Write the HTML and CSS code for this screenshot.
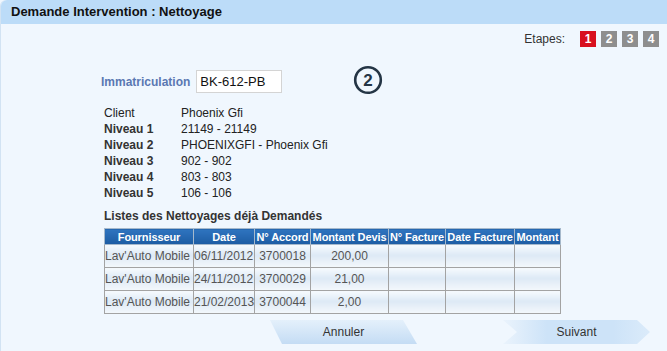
FILE: index.html
```html
<!DOCTYPE html>
<html lang="fr">
<head>
    <meta charset="UTF-8">
    <title>Demande Intervention : Nettoyage</title>
    <link rel="stylesheet" href="styles.css">
</head>
<body>
    <div class="panel">
        <div class="panel-head">Demande Intervention : Nettoyage</div>

        <div class="steps">
            <span class="steps-label">Etapes:</span>
            <span class="step active">1</span>
            <span class="step">2</span>
            <span class="step">3</span>
            <span class="step">4</span>
        </div>

        <div class="content">
            <div class="immat">
                <label for="immat">Immatriculation</label>
                <input type="text" id="immat" value="BK-612-PB">
                <svg class="num" width="30" height="30" viewBox="0 0 30 30">
                    <circle cx="15" cy="15" r="12.8" fill="none" stroke="#243545" stroke-width="2.6"/>
                    <text x="15" y="21" text-anchor="middle" font-family="Liberation Sans, Arial, sans-serif" font-weight="bold" font-size="17" fill="#243545">2</text>
                </svg>
            </div>

            <table class="info">
                <tr><td class="lbl plain">Client</td><td>Phoenix Gfi</td></tr>
                <tr><td class="lbl">Niveau 1</td><td>21149 - 21149</td></tr>
                <tr><td class="lbl">Niveau 2</td><td>PHOENIXGFI - Phoenix Gfi</td></tr>
                <tr><td class="lbl">Niveau 3</td><td>902 - 902</td></tr>
                <tr><td class="lbl">Niveau 4</td><td>803 - 803</td></tr>
                <tr><td class="lbl">Niveau 5</td><td>106 - 106</td></tr>
            </table>

            <h3 class="list-title">Listes des Nettoyages déjà Demandés</h3>

            <table class="grid">
                <colgroup>
                    <col class="c-four">
                    <col class="c-date">
                    <col class="c-acc">
                    <col class="c-dev">
                    <col class="c-fac">
                    <col class="c-dfac">
                    <col class="c-mnt">
                </colgroup>
                <thead>
                    <tr>
                        <th>Fournisseur</th>
                        <th>Date</th>
                        <th>N° Accord</th>
                        <th>Montant Devis</th>
                        <th>N° Facture</th>
                        <th>Date Facture</th>
                        <th>Montant</th>
                    </tr>
                </thead>
                <tbody>
                    <tr>
                        <td>Lav'Auto Mobile</td><td>06/11/2012</td><td class="center">3700018</td><td class="center">200,00</td><td></td><td></td><td></td>
                    </tr>
                    <tr>
                        <td>Lav'Auto Mobile</td><td>24/11/2012</td><td class="center">3700029</td><td class="center">21,00</td><td></td><td></td><td></td>
                    </tr>
                    <tr>
                        <td>Lav'Auto Mobile</td><td>21/02/2013</td><td class="center">3700044</td><td class="center">2,00</td><td></td><td></td><td></td>
                    </tr>
                </tbody>
            </table>
        </div>

        <div class="actions">
            <a class="btn btn-cancel">Annuler</a>
            <a class="btn btn-next">Suivant</a>
        </div>
    </div>
</body>
</html>
```

FILE: styles.css
```css
body {
    margin: 0;
    background-color: #f0f7fe;
    font-family: "Liberation Sans", Arial, sans-serif;
    color: #222;
}
.panel {
    height: 351px;
    border-left: 1px solid #d2e3f3;
    border-top-left-radius: 6px;
    box-sizing: border-box;
}
.panel-head {
    height: 24px;
    line-height: 24px;
    padding-left: 10px;
    background-color: #bcdcf8;
    border-top-left-radius: 6px;
    font-size: 13px;
    font-weight: bold;
    color: #111;
}
.steps {
    display: flex;
    justify-content: flex-end;
    align-items: center;
    gap: 5px;
    height: 16px;
    padding: 7px 8px 0 0;
    font-size: 12px;
    color: #333;
}
.steps-label {
    margin-right: 10px;
}
.step {
    width: 16px;
    height: 16px;
    line-height: 16px;
    text-align: center;
    background-color: #8e8e8e;
    color: #fff;
    font-weight: bold;
}
.step.active {
    background-color: #d8101f;
}
.content {
    padding-left: 100px;
}
.immat {
    display: flex;
    align-items: center;
    height: 23px;
    margin-top: 23px;
}
.immat label {
    font-size: 12px;
    font-weight: bold;
    color: #5a78b2;
    margin-right: 6px;
}
.immat input {
    width: 86px;
    height: 23px;
    box-sizing: border-box;
    border: 1px solid #d4d4d4;
    padding: 0 3px;
    font-family: inherit;
    font-size: 13px;
    color: #111;
    background: #fff;
}
.num {
    margin-left: 71px;
    margin-top: -3px;
}
.info {
    margin-top: 12px;
    margin-left: 3px;
    border-spacing: 0;
    font-size: 12px;
}
.info td {
    padding: 0;
    height: 16px;
    line-height: 16px;
}
.info .lbl {
    width: 77px;
    font-weight: bold;
    color: #333;
}
.info .lbl.plain {
    font-weight: normal;
    color: #222;
}
.list-title {
    margin: 8px 0 5px 3px;
    font-size: 12px;
    line-height: 14px;
    color: #333;
}
.grid {
    width: 456px;
    margin-left: 3px;
    table-layout: fixed;
    border-collapse: collapse;
    font-size: 12px;
}
.grid th {
    height: 15px;
    padding: 0;
    background: linear-gradient(#2f74bf, #1d5ca3);
    color: #fff;
    font-size: 11px;
    font-weight: bold;
    letter-spacing: -0.1px;
    border: 1px solid #a6b9cc;
    white-space: nowrap;
    overflow: hidden;
}
.grid td {
    height: 22px;
    padding: 0;
    border: 1px solid #a3a3a3;
    color: #555;
    white-space: nowrap;
    background: linear-gradient(#f6fafe, #dde9f5 45%, #f4f8fc);
}
.grid .center {
    text-align: center;
}
.c-four { width: 89px; }
.c-date { width: 61px; }
.c-acc { width: 56px; }
.c-dev { width: 78px; }
.c-fac { width: 57px; }
.c-dfac { width: 69px; }
.c-mnt { width: 46px; }
.actions {
    display: flex;
    gap: 86px;
    margin-top: 6px;
    padding-left: 269px;
}
.btn {
    display: block;
    width: 147px;
    height: 24px;
    line-height: 24px;
    text-align: center;
    font-size: 12px;
    color: #333;
    cursor: pointer;
}
.btn-cancel {
    clip-path: polygon(0 0, 133px 0, 147px 100%, 12px 100%);
    background: linear-gradient(#e4f0fb, #c4dcf4);
}
.btn-next {
    clip-path: polygon(0 0, 134px 0, 100% 50%, 134px 100%, 0 100%, 14px 50%);
    background: linear-gradient(to right, #eaf3fc, #cde3f8 30%, #cde3f8 75%, #dbebfa);
}
```
